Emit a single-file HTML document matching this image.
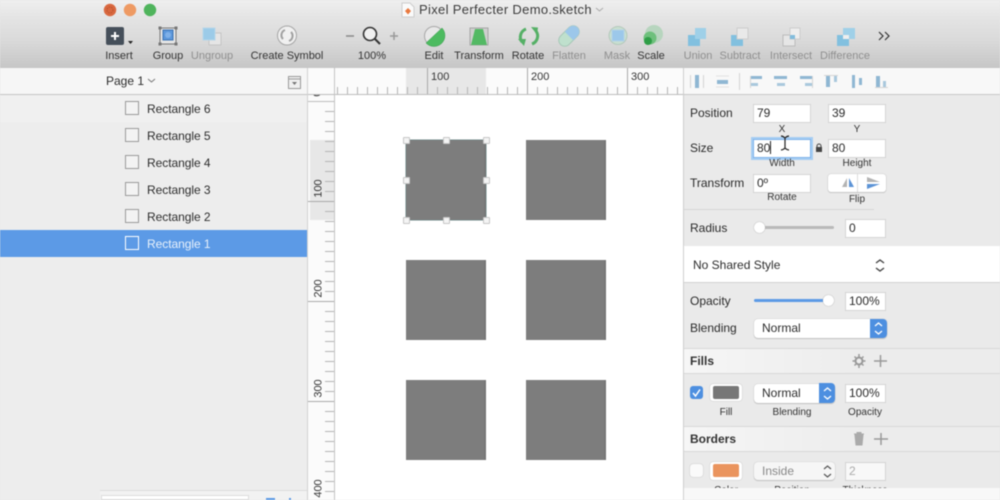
<!DOCTYPE html>
<html style="background:#e8e8e8"><head><meta charset="utf-8"><style>
html,body{margin:0;padding:0}
body{width:1000px;height:500px;overflow:hidden;position:relative;background:#ededed;font-family:"Liberation Sans",sans-serif;color:#222;filter:blur(.55px)}
.a{position:absolute}
.t{position:absolute;white-space:nowrap;font-size:11px;line-height:13px;color:#333;transform:translateX(-50%)}
.g{color:#8f8f8f}
.l{position:absolute;white-space:nowrap;font-size:12px;line-height:14px;color:#2a2a2a;left:690px}
.f{position:absolute;background:#fff;box-sizing:border-box;border:1px solid #d4d4d4;font-size:12px;line-height:17px;padding-left:3px;color:#2a2a2a;height:19px}
.c{position:absolute;white-space:nowrap;font-size:10px;line-height:12px;color:#333;transform:translateX(-50%)}
.row{position:absolute;left:0;width:307px;height:27px}
.cb{position:absolute;left:125px;top:6px;width:14px;height:14px;box-sizing:border-box;border:1px solid #9a9a9a;background:#f3f3f3}
.rt{position:absolute;left:147px;top:7px;font-size:12px;line-height:15px;color:#2c2c2c;letter-spacing:-.05px}
.sq{position:absolute;width:80px;height:80px;background:#7d7d7d;box-sizing:border-box;border-right:2px solid #767676}
.h{position:absolute;width:7px;height:7px;background:#f4f4f4;border:.5px solid #c6c6c6;box-sizing:border-box;border-radius:1px}
.r{position:absolute;font-size:11px;line-height:13px;color:#333}
.v{position:absolute;font-size:11px;line-height:13px;color:#333;transform:rotate(-90deg);transform-origin:center}
.sel{position:absolute;background:#fff;border-radius:4px;box-shadow:0 0 1px #aaa,0 1px 1px #c4c4c4;font-size:12px;line-height:19px;color:#2c2c2c;box-sizing:border-box;padding-left:8px}
</style></head><body>
<div class="a" style="left:0;top:0;width:1000px;height:68px;background:linear-gradient(#efefef 0,#e4e4e4 18px,#dadada 40px,#c6c6c6 68px)"></div>
<svg class="a" style="left:100px;top:0" width="70" height="20"><circle cx="10" cy="10" r="6.200" fill="#d9683f"/><circle cx="10" cy="10" r="3" fill="none" stroke="#b9532e" stroke-dasharray="1.500 1"/><circle cx="30" cy="10" r="6.200" fill="#ee9a63"/><circle cx="50" cy="10" r="6.200" fill="#4fb45c"/></svg>
<svg class="a" style="left:401px;top:2px" width="14" height="16"><path d="M1 1h8l4 4v10H1z" fill="#fafafa" stroke="#ccc"/><path d="M7 6l3 3-3 3.500L4 9z" fill="#e9793f"/></svg>
<div class="a" style="left:419px;top:2px;font-size:13px;line-height:16px;color:#3c3c3c;white-space:nowrap;letter-spacing:.33px">Pixel Perfecter Demo.sketch</div>
<svg class="a" style="left:595px;top:7px" width="10" height="6"><path d="M1 1l3.500 3L8 1" fill="none" stroke="#aaa"/></svg>

<svg class="a" style="left:0;top:0" width="1000" height="68">
<rect x="106" y="27" width="18" height="18" rx="2" fill="#454f5a"/><path d="M115 32v8M111 36h8" stroke="#fff" stroke-width="2"/><path d="M128 41h5l-2.500 3z" fill="#222"/>
<rect x="160" y="28" width="16" height="16" fill="#e4e4e4" stroke="#777"/><rect x="163" y="30" width="10" height="10" fill="#5b97dc" stroke="#3e74b3"/><circle cx="168" cy="35" r="3" fill="#7fb0e8"/>
<g fill="#777"><rect x="158.500" y="26.500" width="3" height="3"/><rect x="174.500" y="26.500" width="3" height="3"/><rect x="158.500" y="42.500" width="3" height="3"/><rect x="174.500" y="42.500" width="3" height="3"/></g>
<rect x="209" y="33" width="12" height="12" fill="#e5e5e5" stroke="#c4c4c4"/><rect x="203" y="28" width="12" height="12" fill="#9ccbe8" stroke="#b7d6e8"/>
<circle cx="287" cy="35.500" r="9.500" fill="#f0f0f0" stroke="#a5a5a5"/><path d="M283 39a5.500 5.500 0 0 1 2-9M291 32a5.500 5.500 0 0 1-2 9" fill="none" stroke="#a0a0a0" stroke-width="2"/>
<path d="M346 36h8" stroke="#888" stroke-width="1.500"/><circle cx="370" cy="34" r="6.500" fill="#f0f0f0" stroke="#333" stroke-width="1.600"/><path d="M375 39l5 5" stroke="#333" stroke-width="2"/><path d="M390 36h8M394 32v8" stroke="#999" stroke-width="1.500"/>
<circle cx="434" cy="36" r="9.500" fill="#e8e8e8" stroke="#a8a8a8"/><path d="M426 43L442 28a9.500 9.500 0 0 1-16 15z" fill="#4dbb60" stroke="#3a9a4d" stroke-width=".5"/>
<rect x="470" y="28" width="18" height="17" fill="#cfcfcf" stroke="#a5a5a5"/><path d="M475 29h8l4 16h-16z" fill="#53b964"/>
<path d="M526 29A8.500 8.500 0 0 0 522 42" fill="none" stroke="#55b066" stroke-width="3"/><path d="M518 39h8l-2 7z" fill="#55b066"/>
<path d="M532 44A8.500 8.500 0 0 0 536 31" fill="none" stroke="#55b066" stroke-width="3"/><path d="M531 27l7 .5-1 7z" fill="#55b066"/>
<g transform="rotate(-45 569 36)"><rect x="557" y="30" width="24" height="12" rx="6" fill="#bfe0cd" stroke="#a8c8b8"/><path d="M569 30h6a6 6 0 0 1 0 12h-6z" fill="#9cc7ea"/></g>
<circle cx="618" cy="35.500" r="9" fill="#c8dfd0" stroke="#b5c9bc"/><rect x="612" y="30" width="12" height="11" fill="#9cc8ea" stroke="#b4d2e6"/>
<circle cx="654" cy="34" r="9" fill="#b7d5be"/><circle cx="650" cy="38" r="6.500" fill="#6ec07c"/><circle cx="648" cy="41" r="4" fill="#2f9e47"/>
<rect x="688" y="35" width="12" height="11" fill="#82c0df"/><rect x="695" y="28" width="11" height="11" fill="#9fd0e8"/>
<rect x="731" y="35" width="12" height="11" fill="#82c0df"/><rect x="737" y="28" width="11" height="11" fill="#e9e9e9" stroke="#ccc"/>
<rect x="783" y="35" width="12" height="11" fill="#e6e6e6" stroke="#bbb"/><rect x="790" y="28" width="10" height="11" fill="#eee" stroke="#ccc"/><rect x="790" y="35" width="5" height="4" fill="#82bcdc"/>
<rect x="837" y="35" width="12" height="11" fill="#82c0df"/><rect x="843" y="28" width="12" height="11" fill="#9fd0e8"/><rect x="843" y="35" width="6" height="4" fill="#eee"/>
<path d="M879 32l4 4-4 4M885 32l4 4-4 4" fill="none" stroke="#333" stroke-width="1.200"/>
</svg>
<div class="t" style="left:119px;top:50px">Insert</div>
<div class="t" style="left:168px;top:50px">Group</div>
<div class="t g" style="left:212px;top:50px">Ungroup</div>
<div class="t" style="left:287px;top:50px">Create Symbol</div>
<div class="t" style="left:372px;top:50px">100%</div>
<div class="t" style="left:434px;top:50px">Edit</div>
<div class="t" style="left:479px;top:50px">Transform</div>
<div class="t" style="left:528px;top:50px">Rotate</div>
<div class="t g" style="left:569px;top:50px">Flatten</div>
<div class="t g" style="left:617px;top:50px">Mask</div>
<div class="t" style="left:651px;top:50px">Scale</div>
<div class="t g" style="left:698px;top:50px">Union</div>
<div class="t g" style="left:740px;top:50px">Subtract</div>
<div class="t g" style="left:791px;top:50px">Intersect</div>
<div class="t g" style="left:845px;top:50px">Difference</div>

<!-- left panel -->
<div class="a" style="left:0;top:68px;width:308px;height:432px;background:#ededed;border-right:1px solid #d2d2d2;box-sizing:border-box"></div>
<div class="a" style="left:0;top:68px;width:307px;height:27px;background:#f6f6f6;border-bottom:1px solid #c4c4c4;box-sizing:border-box"></div>
<div class="a" style="left:106px;top:74px;font-size:12px;line-height:15px;color:#2c2c2c">Page 1</div>
<svg class="a" style="left:147px;top:78px" width="10" height="6"><path d="M1 1l3.500 3L8 1" fill="none" stroke="#777"/></svg>
<svg class="a" style="left:288px;top:76px" width="14" height="14"><rect x=".5" y=".5" width="12" height="12" fill="#f0f0f0" stroke="#999"/><path d="M1 3h11" stroke="#999"/><path d="M4 6h5L6.500 9z" fill="#777"/></svg>
<div class="row" style="top:95px;background:#f0f0f0"><div class="cb"></div><div class="rt">Rectangle 6</div></div>
<div class="row" style="top:122px"><div class="cb"></div><div class="rt">Rectangle 5</div></div>
<div class="row" style="top:149px"><div class="cb"></div><div class="rt">Rectangle 4</div></div>
<div class="row" style="top:176px"><div class="cb"></div><div class="rt">Rectangle 3</div></div>
<div class="row" style="top:203px"><div class="cb"></div><div class="rt">Rectangle 2</div></div>
<div class="row" style="top:230px;background:#5c9ae6"><div class="cb" style="border-color:#fff;background:none"></div><div class="rt" style="color:#e8f1fb">Rectangle 1</div></div>
<div class="a" style="left:100px;top:490px;width:207px;height:10px;background:#f2f2f2;border-top:1px solid #ddd;box-sizing:border-box"></div>
<div class="a" style="left:101px;top:495px;width:148px;height:5px;background:#fff;border:1px solid #ddd;box-sizing:border-box"></div>
<div class="a" style="left:266px;top:498px;width:9px;height:2px;background:#5c9ae6"></div>
<div class="a" style="left:289px;top:498px;width:2px;height:2px;background:#5c9ae6"></div>

<!-- canvas -->
<div class="a" style="left:335px;top:95px;width:348px;height:405px;background:#fff"></div>
<!-- rulers -->
<div class="a" style="left:308px;top:68px;width:375px;height:27px;background:#fbfbfb"></div>
<div class="a" style="left:406px;top:68px;width:80px;height:27px;background:#e7e7e7"></div>
<div class="a" style="left:308px;top:95px;width:27px;height:405px;background:#fbfbfb"></div>
<div class="a" style="left:310px;top:140px;width:25px;height:80px;background:#e7e7e7"></div>
<div class="a" style="left:337px;top:87px;width:346px;height:8px;background:repeating-linear-gradient(90deg,#b5b5b5 0,#b5b5b5 1px,transparent 1px,transparent 10px)"></div>
<div class="a" style="left:325px;top:111px;width:10px;height:389px;background:repeating-linear-gradient(180deg,#b5b5b5 0,#b5b5b5 1px,transparent 1px,transparent 10px)"></div>
<div class="a" style="left:427px;top:68px;width:1px;height:27px;background:#aaa"></div>
<div class="a" style="left:527px;top:68px;width:1px;height:27px;background:#aaa"></div>
<div class="a" style="left:627px;top:68px;width:1px;height:27px;background:#aaa"></div>
<div class="a" style="left:308px;top:201px;width:27px;height:1px;background:#aaa"></div>
<div class="a" style="left:308px;top:301px;width:27px;height:1px;background:#aaa"></div>
<div class="a" style="left:308px;top:401px;width:27px;height:1px;background:#aaa"></div>
<div class="r" style="left:431px;top:71px">100</div>
<div class="r" style="left:531px;top:71px">200</div>
<div class="r" style="left:631px;top:71px">300</div>
<div class="v" style="left:310px;top:182px">100</div>
<div class="v" style="left:310px;top:282px">200</div>
<div class="v" style="left:310px;top:382px">300</div>
<div class="v" style="left:310px;top:482px">400</div>
<div class="a" style="left:308px;top:95px;width:27px;height:6px;overflow:hidden"><div class="v" style="left:7px;top:-8px">0</div></div>
<div class="a" style="left:308px;top:94px;width:375px;height:1px;background:#bdbdbd"></div>
<div class="a" style="left:308px;top:101px;width:27px;height:1px;background:#bdbdbd"></div>
<div class="a" style="left:334px;top:68px;width:1px;height:432px;background:#c4c4c4"></div>

<div class="sq" style="left:406px;top:140px;box-shadow:0 0 0 .5px #6a8f8f"></div>
<div class="sq" style="left:526px;top:140px"></div>
<div class="sq" style="left:406px;top:260px"></div>
<div class="sq" style="left:526px;top:260px"></div>
<div class="sq" style="left:406px;top:380px"></div>
<div class="sq" style="left:526px;top:380px"></div>
<div class="h" style="left:403px;top:137px"></div><div class="h" style="left:443px;top:137px"></div><div class="h" style="left:483px;top:137px"></div>
<div class="h" style="left:403px;top:177px"></div><div class="h" style="left:483px;top:177px"></div>
<div class="h" style="left:403px;top:217px"></div><div class="h" style="left:443px;top:217px"></div><div class="h" style="left:483px;top:217px"></div>

<!-- inspector -->
<div class="a" style="left:683px;top:68px;width:317px;height:432px;background:#eaeaea;border-left:1px solid #cfcfcf;box-sizing:border-box"></div>
<div class="a" style="left:683px;top:68px;width:317px;height:27px;background:#f8f8f8;border-bottom:1px solid #c8c8c8;border-left:1px solid #cfcfcf;box-sizing:border-box"></div>
<svg class="a" style="left:683px;top:68px" width="317" height="27">
<path d="M7.500 7v13M20.500 7v13M56.500 5v17" stroke="#d4d4d4"/><rect x="12" y="7" width="4" height="13" fill="#8fb7d3"/>
<rect x="34" y="12" width="11" height="4" fill="#8fb7d3"/><path d="M33 8h13M33 19h13" stroke="#e2e2e2"/>
<path d="M67.500 8v12M129.500 8v12" stroke="#d5d5d5"/>
<rect x="68" y="8" width="11" height="3" fill="#8fb7d3"/><rect x="68" y="15" width="7" height="3" fill="#a9c8dd"/>
<rect x="91" y="8" width="13" height="3" fill="#8fb7d3"/><rect x="94" y="15" width="8" height="3" fill="#a9c8dd"/>
<rect x="117" y="8" width="12" height="3" fill="#8fb7d3"/><rect x="122" y="15" width="7" height="3" fill="#a9c8dd"/>
<path d="M141 7.500h14" stroke="#d5d5d5"/><rect x="143" y="8" width="4" height="11" fill="#8fb7d3"/><rect x="151" y="8" width="3" height="6" fill="#a9c8dd"/>
<rect x="169" y="7" width="3" height="13" fill="#8fb7d3"/><rect x="176" y="10" width="3" height="7" fill="#8fb7d3"/>
<path d="M192 19.500h13" stroke="#d5d5d5"/><rect x="193" y="8" width="4" height="11" fill="#8fb7d3"/><rect x="200" y="13" width="3" height="6" fill="#a9c8dd"/>
</svg>

<div class="l" style="top:106px">Position</div>
<div class="f" style="left:753px;top:104px;width:58px">79</div>
<div class="f" style="left:828px;top:104px;width:58px">39</div>
<div class="c" style="left:782px;top:124px">X</div>
<div class="c" style="left:857px;top:124px">Y</div>
<div class="l" style="top:141px">Size</div>
<div class="f" style="left:753px;top:139px;width:58px;border:1px solid #7fb2ea;box-shadow:0 0 0 2px #a5cdf3">80<span style="display:inline-block;width:1px;height:13px;background:#222;vertical-align:-2px"></span></div>
<svg class="a" style="left:779px;top:134px" width="12" height="20"><path d="M2 2c2 0 3 1 4 2 1-1 2-2 4-2M6 4v10M2 16c2 0 3-1 4-2 1 1 2 2 4 2" fill="none" stroke="#222" stroke-width="1.200"/></svg>
<svg class="a" style="left:815px;top:143px" width="8" height="10"><path d="M2 4V3a2 2 0 0 1 4 0v1" fill="none" stroke="#444"/><rect x="1" y="4" width="6" height="5" fill="#444"/></svg>
<div class="f" style="left:828px;top:139px;width:58px">80</div>
<div class="c" style="left:782px;top:158px">Width</div>
<div class="c" style="left:857px;top:158px">Height</div>
<div class="l" style="top:176px">Transform</div>
<div class="f" style="left:753px;top:174px;width:58px">0º</div>
<div class="a" style="left:828px;top:174px;width:58px;height:18px;background:#fff;border-radius:3px;box-shadow:0 0 1px #999,0 1px 1px #ccc"></div>
<svg class="a" style="left:828px;top:174px" width="58" height="18"><path d="M29.500 0v18" stroke="#ddd"/><path d="M14 13l5-9v9z" fill="#b3b3b3"/><path d="M21 4l5 9h-5z" fill="#5c93d6"/><path d="M39 3l13 5H39z" fill="#b3b3b3"/><path d="M39 10h13l-13 5z" fill="#5c93d6"/></svg>
<div class="c" style="left:782px;top:192px">Rotate</div>
<div class="c" style="left:857px;top:194px">Flip</div>
<div class="a" style="left:684px;top:209px;width:190px;height:1px;background:#d6d6d6"></div>
<div class="l" style="top:221px">Radius</div>
<div class="a" style="left:759px;top:226px;width:75px;height:3px;background:#b9b9b9;border-radius:2px"></div>
<div class="a" style="left:754px;top:222px;width:11px;height:11px;border-radius:50%;background:#fff;box-shadow:0 0 1px #888"></div>
<div class="f" style="left:845px;top:219px;width:41px">0</div>
<div class="a" style="left:684px;top:246px;width:316px;height:37px;background:#fff;border-bottom:1px solid #d2d2d2;box-sizing:border-box"></div>
<div class="a" style="left:693px;top:258px;font-size:12px;line-height:15px;color:#2c2c2c">No Shared Style</div>
<svg class="a" style="left:874px;top:258px" width="12" height="15"><path d="M2 5l4-3 4 3M2 10l4 3 4-3" fill="none" stroke="#444" stroke-width="1.400"/></svg>
<div class="l" style="top:294px">Opacity</div>
<div class="a" style="left:754px;top:299px;width:74px;height:3px;background:#5c9ae6;border-radius:2px"></div>
<div class="a" style="left:823px;top:295px;width:11px;height:11px;border-radius:50%;background:#fff;box-shadow:0 0 1px #888"></div>
<div class="f" style="left:845px;top:292px;width:41px">100%</div>
<div class="l" style="top:321px">Blending</div>
<div class="sel" style="left:754px;top:319px;width:133px;height:19px">Normal</div>
<div class="a" style="left:870px;top:319px;width:17px;height:19px;background:#4d8fe0;border-radius:0 4px 4px 0"></div>
<svg class="a" style="left:873px;top:321px" width="11" height="15"><path d="M2 5l3.500-3L9 5M2 10l3.500 3L9 10" fill="none" stroke="#fff" stroke-width="1.300"/></svg>
<div class="a" style="left:684px;top:348px;width:316px;height:26px;background:linear-gradient(90deg,#f6f6f6,#ececec 60%);border-top:1px solid #d8d8d8;border-bottom:1px solid #d8d8d8;box-sizing:border-box"></div>
<div class="a" style="left:690px;top:354px;font-size:12px;line-height:14px;font-weight:bold;color:#333">Fills</div>
<svg class="a" style="left:852px;top:353px" width="36" height="16"><circle cx="7" cy="8" r="3.500" fill="none" stroke="#999" stroke-width="2"/><path d="M7 1v3M7 12v3M0.500 8h3M10.500 8h3M2.500 3.500l2 2M9.500 10.500l2 2M2.500 12.500l2-2M9.500 5.500l2-2" stroke="#999" stroke-width="1.500"/><path d="M28.500 2v12M22 8h13" stroke="#999" stroke-width="1.500"/></svg>
<div class="a" style="left:690px;top:386px;width:13px;height:13px;border-radius:3px;background:#4d8fe0"></div>
<svg class="a" style="left:690px;top:386px" width="13" height="13"><path d="M3 7l2.500 3L10 3.500" fill="none" stroke="#fff" stroke-width="1.500"/></svg>
<div class="a" style="left:710px;top:384px;width:32px;height:17px;background:#fff;border-radius:3px;box-shadow:0 0 1px #999"></div>
<div class="a" style="left:713px;top:386px;width:26px;height:13px;background:#777;border-radius:2px"></div>
<div class="sel" style="left:754px;top:384px;width:81px;height:19px">Normal</div>
<div class="a" style="left:819px;top:383px;width:16px;height:20px;background:#4d8fe0;border-radius:0 4px 4px 0"></div>
<svg class="a" style="left:822px;top:386px" width="11" height="15"><path d="M2 5l3.500-3L9 5M2 10l3.500 3L9 10" fill="none" stroke="#fff" stroke-width="1.300"/></svg>
<div class="f" style="left:845px;top:384px;width:41px">100%</div>
<div class="c" style="left:726px;top:407px">Fill</div>
<div class="c" style="left:792px;top:407px">Blending</div>
<div class="c" style="left:865px;top:407px">Opacity</div>
<div class="a" style="left:684px;top:426px;width:316px;height:26px;background:linear-gradient(90deg,#f6f6f6,#ececec 60%);border-top:1px solid #d8d8d8;border-bottom:1px solid #d8d8d8;box-sizing:border-box"></div>
<div class="a" style="left:690px;top:432px;font-size:12px;line-height:14px;font-weight:bold;color:#333">Borders</div>
<svg class="a" style="left:852px;top:431px" width="36" height="16"><path d="M3 4h8l-1 10H4zM2 3h10M5 3V1.500h4V3" fill="#aaa" stroke="#aaa"/><path d="M29 2v12M22 8h14" stroke="#999" stroke-width="1.500"/></svg>
<div class="a" style="left:690px;top:464px;width:13px;height:13px;border-radius:3px;background:#fafafa;box-shadow:0 0 1px #999"></div>
<div class="a" style="left:710px;top:462px;width:32px;height:18px;background:#fff;border-radius:3px;box-shadow:0 0 1px #999"></div>
<div class="a" style="left:713px;top:464px;width:26px;height:13px;background:#ea945e;border-radius:2px"></div>
<div class="sel" style="left:754px;top:462px;width:81px;height:18px;color:#888;background:#f6f6f6">Inside</div>
<svg class="a" style="left:822px;top:464px" width="11" height="15"><path d="M2 5l3.500-3L9 5M2 10l3.500 3L9 10" fill="none" stroke="#555" stroke-width="1.200"/></svg>
<div class="f" style="left:845px;top:462px;width:41px;color:#aaa;background:#f8f8f8">2</div>
<div class="c" style="left:726px;top:485px">Color</div>
<div class="c" style="left:792px;top:485px">Position</div>
<div class="c" style="left:865px;top:485px">Thickness</div>
<div class="a" style="left:684px;top:488px;width:316px;height:12px;background:#f8f8f8"></div>
</body></html>
